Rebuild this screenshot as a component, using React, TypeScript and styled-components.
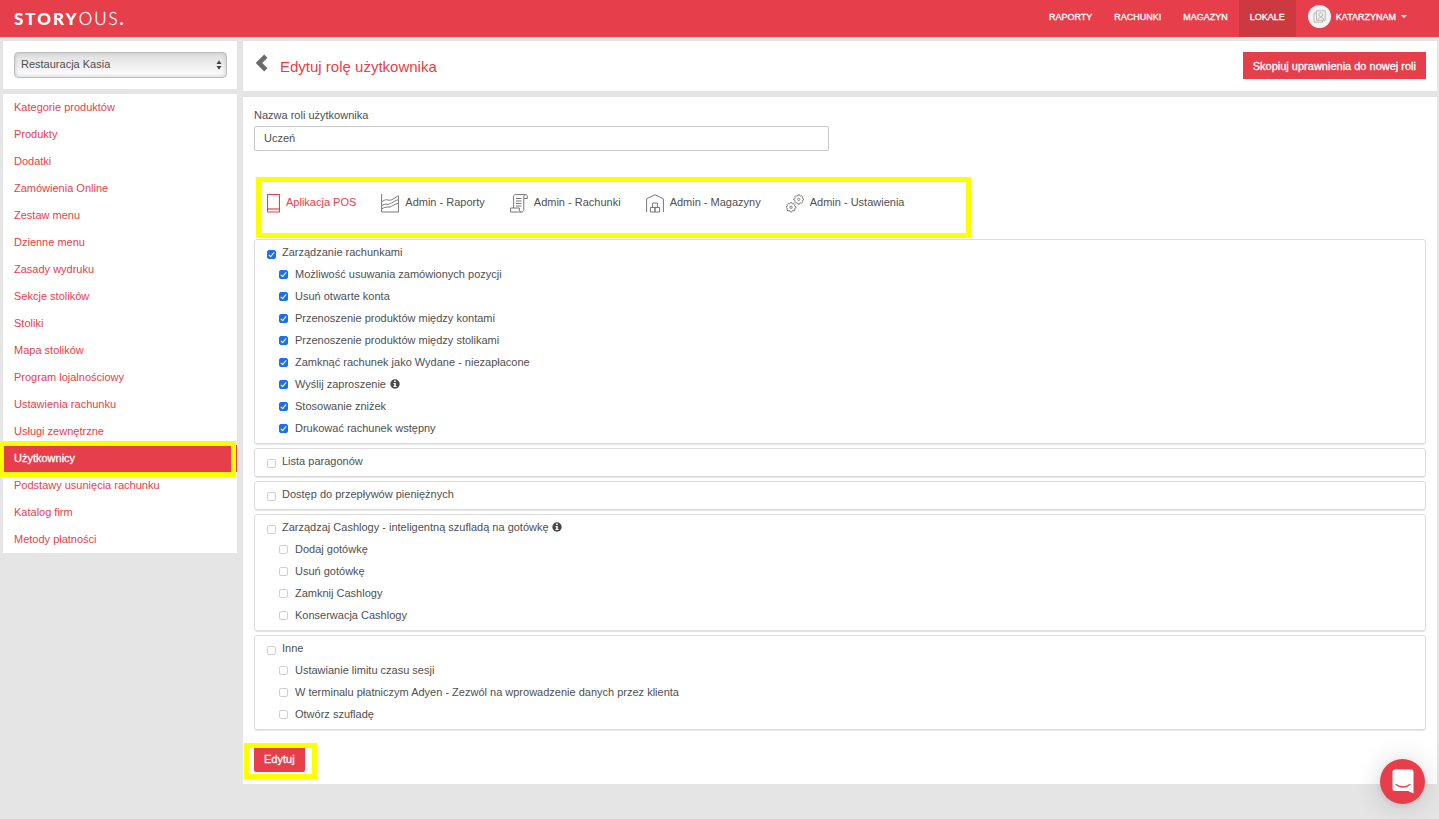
import React from 'react';
import styled, { createGlobalStyle, css } from 'styled-components';

const red = '#e63e4a';
const ink = '#4f4f4f';
const yellow = '#fbff00';

const GlobalStyle = createGlobalStyle`
  *, *::before, *::after { box-sizing: border-box; }
  body {
    margin: 0;
    background: #e5e5e5;
    color: ${ink};
    font: 11px/22px "Liberation Sans", Arial, sans-serif;
  }
  button, input, select { font: inherit; color: inherit; }
`;

const TopBar = styled.header`
  display: flex;
  align-items: center;
  justify-content: space-between;
  height: 37px;
  padding: 0 32px 0 14px;
  background: ${red};
  color: #fff;
`;

const Logo = styled.a`
  font: 900 17px/36px Lato, sans-serif;
  letter-spacing: 2px;
  color: inherit;
  text-decoration: none;
`;

const LogoThin = styled.span`
  font-weight: 300;
  -webkit-text-stroke: 0.3px currentColor;
`;

const TopNav = styled.nav`
  display: flex;
  align-self: stretch;
  font-size: 9px;
`;

const TopLink = styled.a<{ $active?: boolean }>`
  display: flex;
  align-items: center;
  padding: 0 11px 4px;
  color: inherit;
  text-decoration: none;
  -webkit-text-stroke: 0.3px currentColor;
  background: ${p => (p.$active ? '#cc3940' : 'transparent')};
`;

const UserButton = styled.button`
  display: flex;
  align-items: center;
  gap: 5px;
  padding: 0 0 4px 12px;
  border: 0;
  background: none;
  -webkit-text-stroke: 0.3px currentColor;
`;

const Avatar = styled.span`
  display: flex;
  align-items: center;
  justify-content: center;
  width: 23px;
  height: 23px;
  border-radius: 50%;
  background: #f4f2f2;
`;

const Columns = styled.div`
  display: grid;
  grid-template-columns: 234px minmax(0, 1fr);
  align-items: start;
  gap: 6px;
  padding: 4px 2px 35px 3px;
`;

const Column = styled.div<{ $gap: number }>`
  display: flex;
  flex-direction: column;
  gap: ${p => p.$gap}px;
`;

const Card = styled.section`
  background: #fff;
`;

const PickerCard = styled(Card)`
  padding: 11px 10px 11px 11px;
`;

const Picker = styled.div`
  display: grid;
  align-items: center;
  > * { grid-area: 1 / 1; }
  > svg { justify-self: end; margin-right: 5px; pointer-events: none; }
`;

const PickerSelect = styled.select`
  appearance: none;
  width: 100%;
  height: 26px;
  padding: 0 20px 2px 6px;
  border: 1px solid #bdbdbd;
  border-radius: 4px;
  background: linear-gradient(#dedede, #fff);
  box-shadow: inset 0 0 4px #c4c4c4;
`;

const SideNav = styled.nav`
  background: #fff;
`;

const SideLink = styled.a<{ $active?: boolean }>`
  position: relative;
  display: block;
  padding: 0 11px;
  line-height: 27px;
  text-decoration: none;
  color: ${red};
  ${p => p.$active && css`
    background: ${red};
    color: #fff;
    -webkit-text-stroke: 0.3px currentColor;
  `}
`;

const Marker = styled.span<{ $inset: string }>`
  position: absolute;
  inset: ${p => p.$inset};
  border: 5px solid ${yellow};
  pointer-events: none;
`;

const TitleCard = styled(Card)`
  display: flex;
  align-items: flex-start;
  justify-content: space-between;
  padding: 11px 11px 12px;
`;

const TitleGroup = styled.div`
  display: flex;
  align-items: flex-start;
  gap: 11px;
`;

const BackLink = styled.a`
  display: flex;
  padding: 2px 0 0 1px;
`;

const Title = styled.h1`
  margin: 0;
  padding-top: 3px;
  font-size: 15px;
  font-weight: 400;
  line-height: 24px;
  color: ${red};
`;

const SolidButton = styled.button<{ $round?: boolean }>`
  height: ${p => (p.$round ? 25 : 27)}px;
  padding: 0 10px ${p => (p.$round ? 2 : 0)}px;
  border: 0;
  border-radius: ${p => (p.$round ? '0 0 2px 2px' : '0')};
  background: ${red};
  color: #fff;
  -webkit-text-stroke: 0.3px currentColor;
`;

const FormCard = styled(Card)`
  padding: 7px 11px 12px;
`;

const FieldLabel = styled.label`
  display: block;
`;

const TextField = styled.input`
  display: block;
  width: 575px;
  max-width: 100%;
  height: 25px;
  padding: 0 9px 2px;
  border: 1px solid #c8c8c8;
  border-radius: 2px;
`;

const Tabs = styled.div`
  position: relative;
  display: flex;
  gap: 25px;
  width: 715px;
  max-width: 100%;
  height: 61px;
  margin: 26px 0 1px 2px;
  padding: 14px 11px 0;
`;

const Tab = styled.button<{ $active?: boolean }>`
  display: flex;
  align-items: flex-start;
  gap: 6px;
  padding: 0;
  border: 0;
  background: none;
  white-space: nowrap;
  color: ${p => (p.$active ? red : ink)};
  > svg { flex: none; margin-top: 3px; color: ${p => (p.$active ? red : '#777')}; }
`;

const Groups = styled.div`
  display: flex;
  flex-direction: column;
  gap: 4px;
`;

const Group = styled.div`
  padding: 1px 12px 4px;
  border: 1px solid #dcdcdc;
  border-radius: 3px;
  box-shadow: 0 1px 1px #e4e4e4;
`;

const Option = styled.label<{ $child?: boolean }>`
  display: flex;
  align-items: center;
  gap: ${p => (p.$child ? 7 : 6)}px;
  width: fit-content;
  height: 22px;
  margin-left: ${p => (p.$child ? 12 : 0)}px;
  > input { margin-top: ${p => (p.$child ? 1 : 5)}px; }
  > svg { margin-left: -3px; }
`;

const Box = styled.input`
  appearance: none;
  flex: none;
  display: grid;
  place-items: center;
  width: 9px;
  height: 9px;
  margin: 0;
  border: 1px solid #d0d0d0;
  border-radius: 2px;
  background: #fff;
  &:checked { border-color: #1a6ff5; background: #1a6ff5; }
  &:checked::before {
    content: "";
    width: 3px;
    height: 6px;
    margin-top: -1px;
    border: solid #fff;
    border-width: 0 1px 1px 0;
    transform: rotate(40deg);
  }
`;

const Actions = styled.div`
  position: relative;
  width: fit-content;
  margin-top: 17px;
`;

const ChatButton = styled.button`
  position: fixed;
  right: 14px;
  bottom: 15px;
  display: flex;
  align-items: center;
  justify-content: center;
  width: 45px;
  height: 45px;
  padding: 0;
  border: 0;
  border-radius: 50%;
  background: ${red};
  box-shadow: 0 1px 6px rgba(0, 0, 0, 0.1), 0 2px 28px rgba(0, 0, 0, 0.16);
`;

const LineIcon = ({ width = 18, children }: { width?: number; children: React.ReactNode }) => (
  <svg width={width} height="19" viewBox={`0 0 ${width} 19`} fill="none" stroke="currentColor" strokeWidth="1" aria-hidden="true">
    {children}
  </svg>
);

const PosIcon = () => (
  <LineIcon width={13}>
    <rect x="0.5" y="0.5" width="12" height="17.5" rx="0.6" strokeWidth="1.2" />
    <path d="M.5 15h12" strokeWidth="1.2" />
  </LineIcon>
);

const ReportIcon = () => (
  <LineIcon>
    <path d="M.6 0v18h17V2M.6 8c2-1.600 3.500-2.300 5-2.200 2 .2 3 .8 5 0C13 4.800 15 3 17.600 1.500M.6 11.500c2-1 3.500-1.400 5.500-1.200 2 .2 3-.5 4.500-1.400 2.200-1.300 4.500-2.700 7-3.200M.6 15c2.400-1.600 4-2 6-1.800 2 .1 3.500-.6 5-1.600 2-1.200 3.800-1.800 6-2.200" />
  </LineIcon>
);

const BillIcon = () => (
  <LineIcon>
    <path d="M14 4.500h3.400V2.700C17.400 1.500 16.600.6 15.500.6H5.600C4.400.6 3.600 1.500 3.600 2.700V14M15.500.6c-1 0-1.700.8-1.700 2v12.700c0 1.700-1 2.700-2.300 2.700M11.500 18H.6V14h8.800v2c0 1.200.9 2 2.100 2M6 4.500h5.500M6 7h5.500M6 9.500h5.500M6 12h5.500" />
  </LineIcon>
);

const StoreIcon = () => (
  <LineIcon>
    <path d="M.6 18V4.800L9 .7l8.400 4.100V18M6.600 9h4.800v4.500H6.600zM4.400 13.500h4.600V18H4.400zM9 13.500h4.600V18H9z" />
  </LineIcon>
);

const gear = 'M-.9-4.700h1.800l.3 1.200 1 .4 1.100-.6 1.200 1.200-.6 1.100.4 1 1.200.3v1.200l-1.200.3-.4 1 .6 1.100-1.200 1.200-1.100-.6-1 .4-.3 1.200H-.9l-.3-1.200-1-.4-1.100.6-1.200-1.200.6-1.100-.4-1-1.200-.3V-.100l1.200-.3.4-1-.6-1.100 1.200-1.200 1.100.6 1-.4z';

const GearsIcon = () => (
  <LineIcon>
    <g transform="translate(12.700 5) scale(.9)"><path d={gear} /><circle r="1.300" cy=".5" /></g>
    <g transform="translate(5 12.800) scale(.9)"><path d={gear} /><circle r="1.300" cy=".5" /></g>
  </LineIcon>
);

const InfoIcon = () => (
  <svg width="10" height="10" viewBox="0 0 10 10" role="img" aria-label="Info">
    <circle cx="5" cy="5" r="4.700" fill="#4a4a4a" />
    <path d="M4.100 1.500h1.700v1.400H4.100zM3.500 3.900h2.300v3.200h.8v1H3.500v-1h.7V4.900h-.7z" fill="#fff" />
  </svg>
);

const sideItems = [
  'Kategorie produktów', 'Produkty', 'Dodatki', 'Zamówienia Online', 'Zestaw menu', 'Dzienne menu',
  'Zasady wydruku', 'Sekcje stolików', 'Stoliki', 'Mapa stolików', 'Program lojalnościowy',
  'Ustawienia rachunku', 'Usługi zewnętrzne', 'Użytkownicy', 'Podstawy usunięcia rachunku',
  'Katalog firm', 'Metody płatności',
];

const tabs = [
  { label: 'Aplikacja POS', Icon: PosIcon },
  { label: 'Admin - Raporty', Icon: ReportIcon },
  { label: 'Admin - Rachunki', Icon: BillIcon },
  { label: 'Admin - Magazyny', Icon: StoreIcon },
  { label: 'Admin - Ustawienia', Icon: GearsIcon },
];

const groups = [
  {
    label: 'Zarządzanie rachunkami',
    checked: true,
    items: [
      'Możliwość usuwania zamówionych pozycji', 'Usuń otwarte konta',
      'Przenoszenie produktów między kontami', 'Przenoszenie produktów między stolikami',
      'Zamknąć rachunek jako Wydane - niezapłacone', 'Wyślij zaproszenie',
      'Stosowanie zniżek', 'Drukować rachunek wstępny',
    ],
  },
  { label: 'Lista paragonów', checked: false, items: [] },
  { label: 'Dostęp do przepływów pieniężnych', checked: false, items: [] },
  {
    label: 'Zarządzaj Cashlogy - inteligentną szufladą na gotówkę',
    checked: false,
    items: ['Dodaj gotówkę', 'Usuń gotówkę', 'Zamknij Cashlogy', 'Konserwacja Cashlogy'],
  },
  {
    label: 'Inne',
    checked: false,
    items: [
      'Ustawianie limitu czasu sesji',
      'W terminalu płatniczym Adyen - Zezwól na wprowadzenie danych przez klienta',
      'Otwórz szufladę',
    ],
  },
];

const withInfo = ['Wyślij zaproszenie', 'Zarządzaj Cashlogy - inteligentną szufladą na gotówkę'];

const Permission = ({ label, checked, child }: { label: string; checked: boolean; child?: boolean }) => (
  <Option $child={child}>
    <Box type="checkbox" defaultChecked={checked} />
    {label}
    {withInfo.includes(label) && <InfoIcon />}
  </Option>
);

export default function App() {
  return (
    <>
      <GlobalStyle />
      <TopBar>
        <Logo href="#">STORY<LogoThin>OUS</LogoThin>.</Logo>
        <TopNav>
          {['RAPORTY', 'RACHUNKI', 'MAGAZYN', 'LOKALE'].map(name => (
            <TopLink key={name} href="#" $active={name === 'LOKALE'}>{name}</TopLink>
          ))}
          <UserButton type="button">
            <Avatar>
              <svg width="13" height="13" viewBox="0 0 13 13" fill="none" stroke="#aaa" strokeWidth="0.8" aria-hidden="true">
                <path d="M3.500.8h8.700v9.500H3.500zM3.500 3H1v9.200h8.500v-1.900M5 10.300c0-2 1-3 2.800-3s2.900 1 2.900 3" />
                <circle cx="7.800" cy="4.700" r="1.900" />
              </svg>
            </Avatar>
            KATARZYNAM
            <svg width="6" height="3" viewBox="0 0 6 3" aria-hidden="true"><path d="M0 0h6L3 3z" fill="#fff" /></svg>
          </UserButton>
        </TopNav>
      </TopBar>

      <Columns>
        <Column as="aside" $gap={5}>
          <PickerCard>
            <Picker>
              <PickerSelect aria-label="Restauracja">
                <option>Restauracja Kasia</option>
              </PickerSelect>
              <svg width="6" height="10" viewBox="0 0 6 10" aria-hidden="true">
                <path d="M.5 4L3 .3 5.500 4zM.5 6L3 9.700 5.500 6z" fill="#444" />
              </svg>
            </Picker>
          </PickerCard>
          <SideNav>
            {sideItems.map(name => (
              <SideLink key={name} href="#" $active={name === 'Użytkownicy'}>
                {name}
                {name === 'Użytkownicy' && <Marker $inset="-4px 1px -5px -4px" />}
              </SideLink>
            ))}
          </SideNav>
        </Column>

        <Column as="main" $gap={6}>
          <TitleCard>
            <TitleGroup>
              <BackLink href="#" aria-label="Wstecz">
                <svg width="14" height="18" viewBox="0 0 14 18" aria-hidden="true">
                  <path d="M10.800 2.200L4 9l6.800 6.800" fill="none" stroke="#6b6b6b" strokeWidth="4.600" />
                </svg>
              </BackLink>
              <Title>Edytuj rolę użytkownika</Title>
            </TitleGroup>
            <SolidButton type="button">Skopiuj uprawnienia do nowej roli</SolidButton>
          </TitleCard>

          <FormCard as="form">
            <FieldLabel htmlFor="role-name">Nazwa roli użytkownika</FieldLabel>
            <TextField id="role-name" defaultValue="Uczeń" />
            <Tabs role="tablist">
              {tabs.map(({ label, Icon }, i) => (
                <Tab key={label} type="button" role="tab" aria-selected={i === 0} $active={i === 0}>
                  <Icon />
                  {label}
                </Tab>
              ))}
              <Marker $inset="0" />
            </Tabs>
            <Groups>
              {groups.map(group => (
                <Group key={group.label}>
                  <Permission label={group.label} checked={group.checked} />
                  {group.items.map(item => (
                    <Permission key={item} label={item} checked={group.checked} child />
                  ))}
                </Group>
              ))}
            </Groups>
            <Actions>
              <SolidButton type="button" $round>Edytuj</SolidButton>
              <Marker $inset="-4px -12px -7px -10px" />
            </Actions>
          </FormCard>
        </Column>
      </Columns>

      <ChatButton type="button" aria-label="Czat">
        <svg width="22" height="25" viewBox="0 0 22 25" aria-hidden="true">
          <path d="M3 .5h16a2.500 2.500 0 0 1 2.500 2.500v21.500L16 22H3A2.500 2.500 0 0 1 .5 19.500V3A2.500 2.500 0 0 1 3 .5z" fill="#fff" />
          <path d="M4 15.500c4 3.300 10 3.300 14 0" fill="none" stroke={red} strokeWidth="1.300" strokeLinecap="round" />
        </svg>
      </ChatButton>
    </>
  );
}
